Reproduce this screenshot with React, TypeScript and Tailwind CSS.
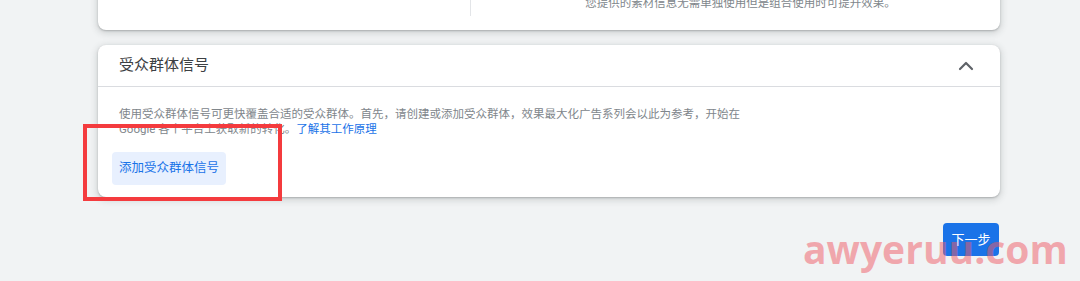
import { ChevronUp } from "lucide-react"

const font = "font-['Roboto','Noto_Sans_CJK_SC',sans-serif]"

function TopCard() {
  return (
    <div className="relative -mt-[20px] ml-[98px] h-[50px] w-[902px] overflow-hidden rounded-b-[8px] bg-white shadow-[0_1px_2px_rgba(60,64,67,0.3),0_2px_6px_2px_rgba(60,64,67,0.15)]">
      <div className="flex h-full">
        <div className="mb-[14px] w-[373px] border-r border-[#e3e5e8]" />
        <div className="flex-1 pt-[15px] pl-[10px] text-center text-[11.5px] leading-[16px] text-[#80868b]">
          您提供的素材信息无需单独使用但是组合使用时可提升效果。
        </div>
      </div>
    </div>
  )
}

function AudienceCard() {
  return (
    <div className="mt-[15px] ml-[98px] w-[902px] rounded-[8px] bg-white shadow-[0_1px_2px_rgba(60,64,67,0.3),0_2px_6px_2px_rgba(60,64,67,0.15)]">
      <div className="flex h-[42px] items-center justify-between border-b border-[#dadce0] pl-[21px] pr-[22px]">
        <span className="text-[15px] text-[#3c4043]">受众群体信号</span>
        <ChevronUp className="h-[24px] w-[24px] text-[#5f6368]" strokeWidth={2.2} />
      </div>
      <div className="px-[21px] pt-[20px] pb-[12px]">
        <p className="w-[630px] text-[11.5px] leading-[15px] text-[#80868b]">
          使用受众群体信号可更快覆盖合适的受众群体。首先，请创建或添加受众群体，效果最大化广告系列会以此为参考，开始在
          Google 各个平台上获取新的转化。
          <span className="text-[#1a73e8]">了解其工作原理</span>
        </p>
        <button className="mt-[15px] -ml-[7px] h-[33px] rounded-[4px] bg-[#e8f0fe] px-[7px] text-[12.5px] text-[#1a73e8]">
          添加受众群体信号
        </button>
      </div>
    </div>
  )
}

export default function App() {
  return (
    <div className={`relative h-[281px] w-[1080px] overflow-hidden bg-[#f1f3f4] ${font}`}>
      <TopCard />
      <AudienceCard />
      <div className="mt-[26px] flex w-[999px] justify-end">
        <button className="h-[33px] w-[56px] rounded-[4px] bg-[#1a73e8] text-[13px] text-white">下一步</button>
      </div>

      {/* annotation box */}
      <div className="absolute left-[83px] top-[124px] h-[77px] w-[199px] border-[4px] border-[#f43b3e]" />

      {/* watermark */}
      <div className="pointer-events-none absolute left-[803px] top-[225px] font-['Open_Sans',sans-serif] text-[39px] font-bold leading-[48px] text-[rgba(240,90,100,0.5)]">
        awyeruu.com
      </div>
    </div>
  )
}
